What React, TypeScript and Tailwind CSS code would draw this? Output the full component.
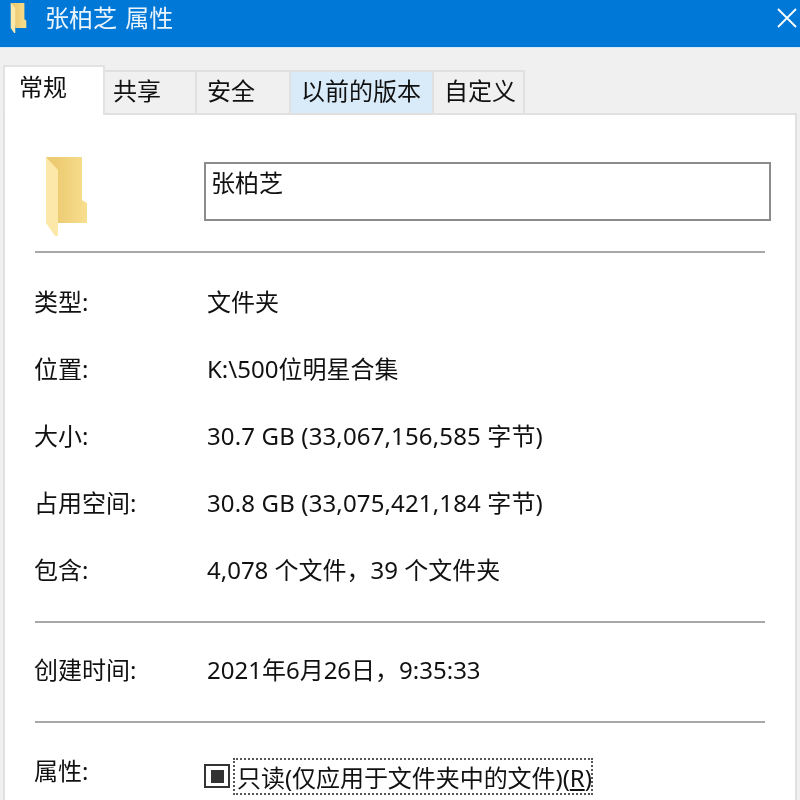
import React from "react";

const font = "font-['Noto_Sans','Noto_Sans_CJK_SC',sans-serif]";

const FolderIcon = ({ className }: { className: string }) => (
  <svg viewBox="0 0 41 79" className={className}>
    <defs>
      <linearGradient id="folderBack" x1="0" y1="0" x2="1" y2="0">
        <stop offset="0.25" stopColor="#eccb72" />
        <stop offset="1" stopColor="#f8df8f" />
      </linearGradient>
    </defs>
    <path d="M0 0H36V43L41 46V66H12V60Z" fill="url(#folderBack)" />
    <path d="M0 0L12 13V79H9L0 66Z" fill="#fce8a8" />
  </svg>
);

const tabs = [
  { label: "共享", w: "w-[92px]", pl: "pl-[8px]", bg: "bg-[#f0f0f0]" },
  { label: "安全", w: "w-[94px]", pl: "pl-[10px]", bg: "bg-[#f0f0f0]" },
  { label: "以前的版本", w: "w-[143px]", pl: "pl-[10px]", bg: "bg-[#d9ebf9]" },
  { label: "自定义", w: "w-[91px]", pl: "pl-[10px]", bg: "bg-[#f0f0f0]" },
];

const Row = ({ label, value, wide }: { label: string; value: string; wide?: boolean }) => (
  <div className="flex h-[67px] items-center">
    <div className="w-[173px] text-[#111]">{label}</div>
    <div className={wide ? "tracking-[0.14px] text-[#111]" : "text-[#111]"}>{value}</div>
  </div>
);

const Line = ({ className = "" }: { className?: string }) => (
  <div className={`mr-[30px] h-[2px] bg-[#a8a8a8] ${className}`} />
);

export default function App() {
  return (
    <div className={`flex h-[800px] w-[800px] flex-col overflow-hidden bg-[#f0f0f0] text-[24px] leading-[32px] blur-[0.4px] ${font}`}>
      <div className="flex h-[47px] shrink-0 items-center bg-[#0078d7] pb-[12px] pl-[9px] pr-[3px] text-white">
        <FolderIcon className="h-[30px] w-[19px]" />
        <span className="ml-[17px] text-[#eaf4fc] [word-spacing:2px]">张柏芝 属性</span>
        <svg viewBox="0 0 20 20" className="ml-auto mb-[-1px] h-[20px] w-[20px]">
          <path d="M1 1L19 19M19 1L1 19" stroke="white" strokeWidth="1.8" />
        </svg>
      </div>
      <div className="h-[1px] shrink-0 bg-[#d8e8f5]" />

      <div className="relative mt-[18px] flex h-[47px] shrink-0 items-end pl-[3px]">
        <div className="z-10 -mb-[2px] flex h-[50px] w-[102px] items-start border-x-2 border-t-2 border-[#e2e2e2] bg-white pl-[14px] pt-[4px] text-[#111]">
          常规
        </div>
        {tabs.map((t) => (
          <div
            key={t.label}
            className={`flex h-[43px] ${t.w} ${t.pl} items-center border-r-2 border-t-2 border-[#e0e0e0] pb-[3px] text-[#111] ${t.bg}`}
          >
            {t.label}
          </div>
        ))}
      </div>

      <div className="ml-[3px] mr-[3px] flex-1 border-x-2 border-t-2 border-[#e0e0e0] bg-white pl-[30px]">
        <div className="flex h-[136px] items-start">
          <FolderIcon className="ml-[11px] mt-[42px] h-[79px] w-[41px]" />
          <div className="ml-[117px] mr-[24px] mt-[47px] h-[59px] flex-1 border-2 border-[#8c8c8c] pl-[5px] pt-[3px] text-[#111]">
            张柏芝
          </div>
        </div>
        <Line />
        <div className="-ml-[1px] pt-[15px]">
          <Row label="类型:" value="文件夹" />
          <Row label="位置:" value="K:\500位明星合集" />
          <Row wide label="大小:" value="30.7 GB (33,067,156,585 字节)" />
          <Row wide label="占用空间:" value="30.8 GB (33,075,421,184 字节)" />
          <Row label="包含:" value="4,078 个文件，39 个文件夹" />
        </div>
        <Line className="mt-[18px]" />
        <div className="-ml-[1px] pt-[13px]">
          <Row label="创建时间:" value="2021年6月26日，9:35:33" />
        </div>
        <Line className="mt-[18px]" />
        <div className="-ml-[1px] mt-[32px] flex items-start">
          <div className="w-[170px] text-[#111]">属性:</div>
          <div className="mt-[9px] flex h-[24px] w-[26px] shrink-0 items-center justify-center border-2 border-[#333] bg-white">
            <div className="h-[13px] w-[13px] bg-[#333]" />
          </div>
          <div className="ml-[3px] mt-[3px] flex h-[37px] w-[360px] items-center whitespace-nowrap border-2 border-dotted border-[#555] pl-[2px] pt-[2px] tracking-[-0.05px] text-[#111]">
            <span>只读(仅应用于文件夹中的文件)(<span className="underline">R</span>)</span>
          </div>
        </div>
      </div>
    </div>
  );
}
